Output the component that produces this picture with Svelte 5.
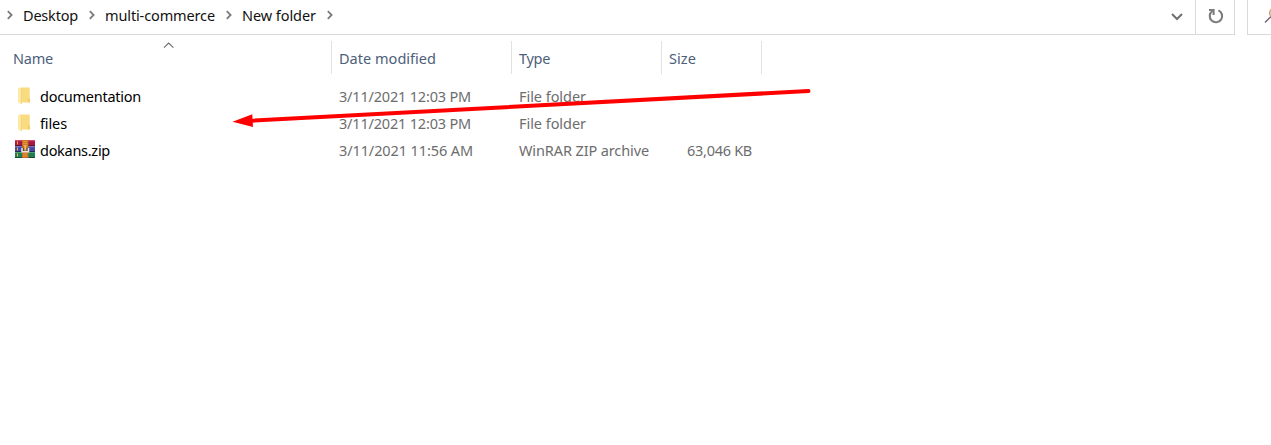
<script>
  const crumbs = [
    { name: 'Desktop', width: 55 },
    { name: 'multi-commerce', width: 110 },
    { name: 'New folder', width: 74 }
  ];
  const columns = [
    { name: 'Name', width: 40 },
    { name: 'Date modified', width: 97 },
    { name: 'Type', width: 31 },
    { name: 'Size', width: 27 }
  ];
  const rows = [
    { icon: 'folder', name: 'documentation', nw: 101, date: '3/11/2021 12:03 PM', dw: 132, type: 'File folder', tw: 67, size: '' },
    { icon: 'folder', name: 'files', nw: 27, date: '3/11/2021 12:03 PM', dw: 132, type: 'File folder', tw: 67, size: '' },
    { icon: 'zip', name: 'dokans.zip', nw: 70, date: '3/11/2021 11:56 AM', dw: 134, type: 'WinRAR ZIP archive', tw: 130, size: '63,046 KB' }
  ];

  // Spreads the letters so that a label takes the given width.
  function fit(node, width) {
    const natural = node.getBoundingClientRect().width;
    node.style.letterSpacing = (width - natural) / node.textContent.length + 'px';
  }
</script>

{#snippet chevron()}
  <svg class="chevron" width="8" height="10" viewBox="0 0 8 10"><path d="M1.8 1.2L5.6 5L1.8 8.8" fill="none" stroke="#7b7b7b" stroke-width="1.8" /></svg>
{/snippet}

<main>
  <header>
    <nav>
      {@render chevron()}
      {#each crumbs as c}
        <span class="crumb"><span class="label" use:fit={c.width}>{c.name}</span></span>
        {@render chevron()}
      {/each}
      <svg class="drop" width="14" height="10" viewBox="0 0 14 10"><path d="M2 2L7 7L12 2" fill="none" stroke="#707070" stroke-width="2" /></svg>
    </nav>
    <div class="refresh">
      <svg width="18" height="18" viewBox="0 0 18 18">
        <path d="M11.4 3.4A6.2 6.2 0 1 1 5.4 4" fill="none" stroke="#7c7c7c" stroke-width="2.1" />
        <path d="M2 3H6.6V8" fill="none" stroke="#7c7c7c" stroke-width="2" />
      </svg>
    </div>
    <div class="search">
      <svg width="18" height="18" viewBox="0 0 18 18"><path d="M1 14.5L7 8.5" stroke="#6b6670" stroke-width="1.5" /><circle cx="10" cy="5" r="4.5" fill="#bcdcf8" stroke="#d59b65" stroke-width="1.2" /></svg>
    </div>
  </header>

  <div class="head grid">
    {#each columns as c, i}
      <div class="th">
        {#if i === 0}
          <svg class="sort" width="12" height="7" viewBox="0 0 12 7"><path d="M1 5.7L5.7 1L10.4 5.7" fill="none" stroke="#6d6d6d" stroke-width="1.1" /></svg>
        {/if}
        <span class="label" use:fit={c.width}>{c.name}</span>
      </div>
    {/each}
  </div>

  <div class="body">
    {#each rows as r}
      <div class="row grid">
        <div class="name">
          {#if r.icon === 'folder'}
            <svg class="icon" width="20" height="20" viewBox="0 0 20 20">
              <path d="M5 1.5H14.7V12L14.9 13V16.5H5Z" fill="#f9db80" />
              <path d="M12.8 12.5H15V16.5H12.8Z" fill="#f2cf6c" />
              <path d="M3 1.5L6.4 3.5V18.5L3 16.3Z" fill="#ffe9a6" />
              <path d="M6.4 4V18" stroke="#efcb6b" stroke-width=".6" />
            </svg>
          {:else}
            <svg class="icon" width="20" height="20" viewBox="0 0 20 20">
              <rect width="20" height="6" fill="#a91842" />
              <rect width="20" height="1.2" fill="#d54970" />
              <rect y="5" width="20" height="1.2" fill="#65102d" />
              <rect y="6" width="20" height="6" fill="#4548a5" />
              <rect y="6" width="20" height="1.2" fill="#7476c7" />
              <rect y="11" width="20" height="1" fill="#26285c" />
              <rect y="12" width="20" height="6" fill="#218052" />
              <rect y="12" width="20" height="1" fill="#4aa575" />
              <rect y="17" width="20" height="1" fill="#164c34" />
              <path d="M2.5 1.5V4.5M2.5 7.5V10.5M2.5 13.5V16.5" stroke="#e6b64c" stroke-width="1" />
              <rect x="7" width="6.5" height="18" fill="#c16b21" />
              <path d="M8 1.3H12.5M8 3.3H12.5M8 5.2H12.5M8 14H12.5M8 16H12.5" stroke="#eba348" stroke-width="1" />
              <path d="M7 8V11.7H13.5V8" fill="#60483a" stroke="#e8e5df" stroke-width="1.6" />
              <rect x="9.3" y="5.2" width="2" height="5.4" fill="#f0ba64" />
            </svg>
          {/if}
          <span class="label" use:fit={r.nw}>{r.name}</span>
        </div>
        <div class="cell"><span class="label" use:fit={r.dw}>{r.date}</span></div>
        <div class="cell"><span class="label" use:fit={r.tw}>{r.type}</span></div>
        <div class="cell size">{#if r.size}<span class="label" use:fit={65}>{r.size}</span>{/if}</div>
      </div>
    {/each}
  </div>

  <svg class="arrow" width="1271" height="445" viewBox="0 0 1271 445">
    <path d="M250 120.8L808.5 91" stroke="#f00" stroke-width="4" stroke-linecap="round" />
    <path d="M232.5 121.8L252.3 114.3L253 127Z" fill="#f00" />
  </svg>
</main>

<style>
  :global(body) { background: #fff; }
  main {
    position: relative;
    height: 445px;
    overflow: hidden;
    background: #fff;
    font: 14.5px/20px "Noto Sans", sans-serif;
    color: #111;
  }
  .label { display: inline-block; white-space: nowrap; }
  header { display: flex; height: 35px; box-sizing: border-box; }
  nav {
    display: flex;
    align-items: center;
    width: 1195px;
    box-sizing: border-box;
    padding: 0 11px 4px 6px;
    border-bottom: 1px solid #d9d9d9;
  }
  .chevron { flex: none; }
  .crumb { margin: 0 10px 0 9px; }
  .drop { margin-left: auto; margin-top: 3px; }
  .refresh {
    width: 40px;
    box-sizing: border-box;
    padding: 7px 0 0 11px;
    border: 1px solid #d9d9d9;
    border-top: 0;
  }
  .search {
    flex: 1;
    overflow: hidden;
    margin-left: 12px;
    padding: 8px 0 0 16px;
    border-left: 1px solid #d9d9d9;
    border-bottom: 1px solid #d9d9d9;
  }
  .grid { display: grid; grid-template-columns: 332px 180px 150px 100px; }
  .head { padding-top: 6px; color: #4c607a; }
  .th {
    position: relative;
    height: 33px;
    box-sizing: border-box;
    padding: 7px 0 0 7px;
    border-right: 1px solid #e2e2e2;
  }
  .th:first-child { padding-left: 13px; }
  .sort { position: absolute; left: 163px; top: 1px; }
  .body { padding-top: 8px; }
  .row { height: 27px; align-items: center; }
  .name { display: flex; align-items: center; padding-left: 15px; color: #000; }
  .icon { margin: 1px 5px 0 0; }
  .cell { padding-left: 7px; color: #6d6d6d; }
  .size { padding: 0 10px 0 0; text-align: right; }
  .arrow { position: absolute; inset: 0; pointer-events: none; }
</style>
